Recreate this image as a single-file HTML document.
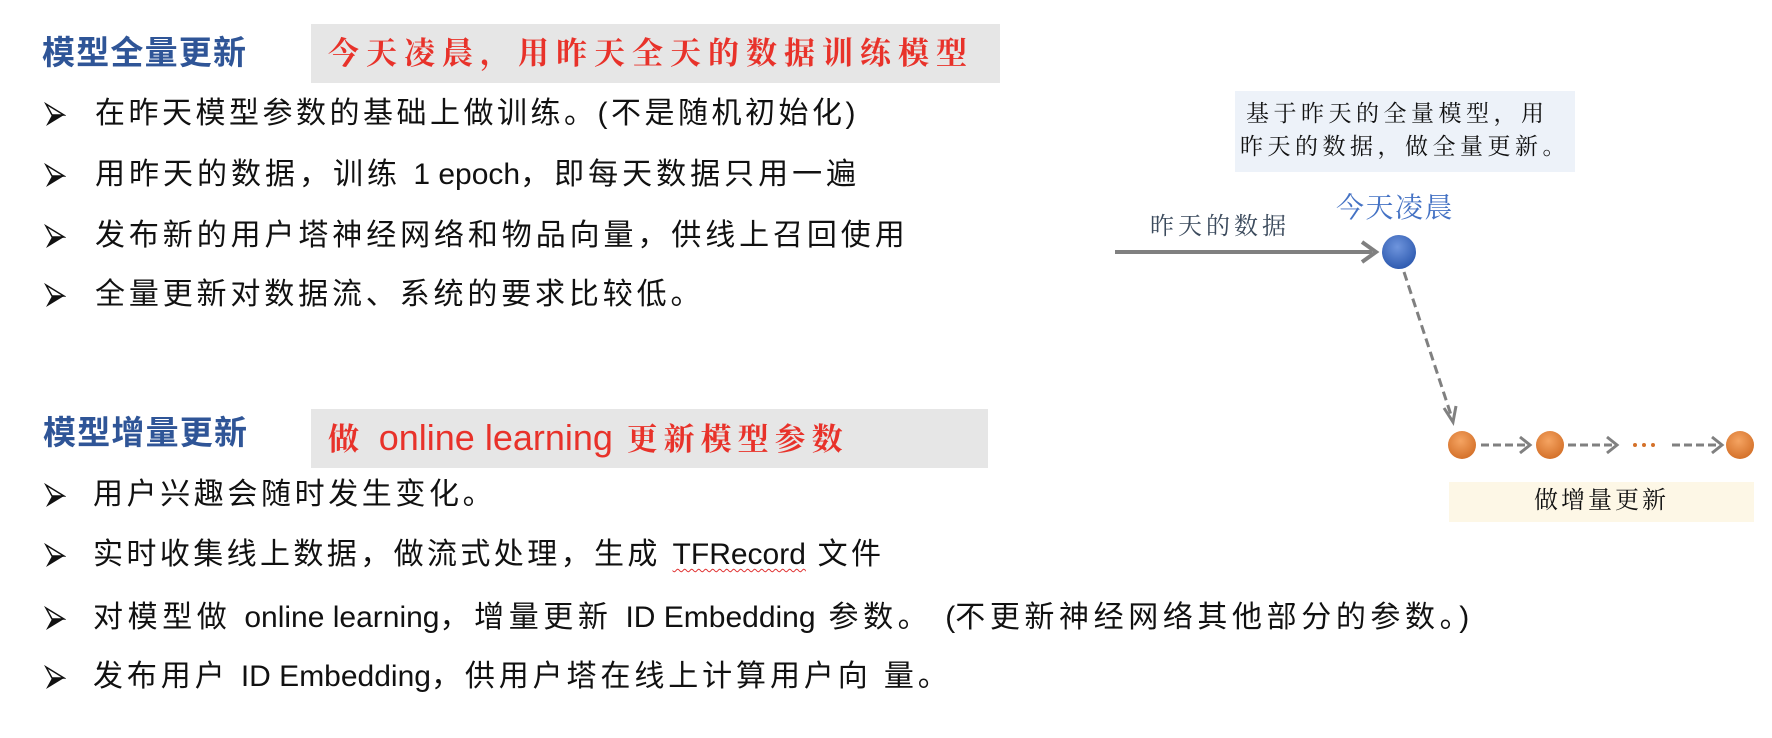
<!DOCTYPE html>
<html><head><meta charset="utf-8"><style>
html,body{margin:0;padding:0;background:#fff;width:1772px;height:738px;overflow:hidden;position:relative;font-family:"Liberation Sans","Noto Sans CJK SC",sans-serif;}
.a{position:absolute;white-space:nowrap;}
.h{font-weight:bold;color:#2f5597;font-size:33px;letter-spacing:1.2px;line-height:36px;}
.box{position:absolute;background:#e6e6e6;}
.red{color:#e8322a;font-family:"Liberation Serif","Noto Serif CJK SC",serif;font-weight:bold;font-size:31px;line-height:34px;}
.li{font-size:30px;line-height:34px;color:#111;}
.li span,.l{letter-spacing:0;}
.bu{position:absolute;width:22px;height:26px;}
.sf{font-family:"Liberation Serif","Noto Serif CJK SC",serif;}
</style></head><body>
<div class="a h" style="left:42px;top:35px;">模型全量更新</div>
<div class="box" style="left:311px;top:24px;width:689px;height:59px;"></div>
<div class="a red" style="left:328px;top:37px;letter-spacing:7px;">今天凌晨，用昨天全天的数据训练模型</div>

<svg class="bu" style="left:44px;top:102px" viewBox="0 0 22 26"><path d="M2 2 L20 13 L2 24 L8 13 Z" fill="#111"/><path d="M2 2 L20 13 L8 13 Z" fill="#fff" stroke="#111" stroke-width="1.5"/></svg>
<div class="a li" style="left:95px;top:97px;letter-spacing:3.5px;">在昨天模型参数的基础上做训练。(不是随机初始化)</div>
<svg class="bu" style="left:44px;top:163px" viewBox="0 0 22 26"><path d="M2 2 L20 13 L2 24 L8 13 Z" fill="#111"/><path d="M2 2 L20 13 L8 13 Z" fill="#fff" stroke="#111" stroke-width="1.5"/></svg>
<div class="a li" style="left:95px;top:158px;letter-spacing:4px;">用昨天的数据，训练 <span>1 epoch</span>，即每天数据只用一遍</div>
<svg class="bu" style="left:44px;top:224px" viewBox="0 0 22 26"><path d="M2 2 L20 13 L2 24 L8 13 Z" fill="#111"/><path d="M2 2 L20 13 L8 13 Z" fill="#fff" stroke="#111" stroke-width="1.5"/></svg>
<div class="a li" style="left:95px;top:219px;letter-spacing:3.9px;">发布新的用户塔神经网络和物品向量，供线上召回使用</div>
<svg class="bu" style="left:44px;top:283px" viewBox="0 0 22 26"><path d="M2 2 L20 13 L2 24 L8 13 Z" fill="#111"/><path d="M2 2 L20 13 L8 13 Z" fill="#fff" stroke="#111" stroke-width="1.5"/></svg>
<div class="a li" style="left:95px;top:278px;letter-spacing:3.85px;">全量更新对数据流、系统的要求比较低。</div>

<div class="a h" style="left:43px;top:415px;">模型增量更新</div>
<div class="box" style="left:311px;top:409px;width:677px;height:59px;"></div>
<div class="a red" style="left:328px;top:421px;letter-spacing:6px;">做 <span style="font-family:'Liberation Sans',sans-serif;font-weight:normal;letter-spacing:0;font-size:36px;">online learning</span> 更新模型参数</div>

<svg class="bu" style="left:44px;top:483px" viewBox="0 0 22 26"><path d="M2 2 L20 13 L2 24 L8 13 Z" fill="#111"/><path d="M2 2 L20 13 L8 13 Z" fill="#fff" stroke="#111" stroke-width="1.5"/></svg>
<div class="a li" style="left:93px;top:478px;letter-spacing:3.6px;">用户兴趣会随时发生变化。</div>
<svg class="bu" style="left:44px;top:543px" viewBox="0 0 22 26"><path d="M2 2 L20 13 L2 24 L8 13 Z" fill="#111"/><path d="M2 2 L20 13 L8 13 Z" fill="#fff" stroke="#111" stroke-width="1.5"/></svg>
<div class="a li" style="left:93px;top:538px;letter-spacing:3.4px;">实时收集线上数据，做流式处理，生成 <span style="text-decoration:underline wavy #e03030;text-decoration-thickness:1px;text-underline-offset:4px;">TFRecord</span> 文件</div>
<svg class="bu" style="left:44px;top:606px" viewBox="0 0 22 26"><path d="M2 2 L20 13 L2 24 L8 13 Z" fill="#111"/><path d="M2 2 L20 13 L8 13 Z" fill="#fff" stroke="#111" stroke-width="1.5"/></svg>
<div class="a li" style="left:93px;top:601px;letter-spacing:4.6px;">对模型做 <span>online learning</span>，增量更新 <span>ID Embedding</span> 参数。 <span>(</span>不更新神经网络其他部分的参数。<span>)</span></div>
<svg class="bu" style="left:44px;top:665px" viewBox="0 0 22 26"><path d="M2 2 L20 13 L2 24 L8 13 Z" fill="#111"/><path d="M2 2 L20 13 L8 13 Z" fill="#fff" stroke="#111" stroke-width="1.5"/></svg>
<div class="a li" style="left:93px;top:660px;letter-spacing:3.9px;">发布用户 <span>ID Embedding</span>，供用户塔在线上计算用户向 量。</div>

<div class="box" style="left:1235px;top:91px;width:340px;height:81px;background:#edf2f9;"></div>
<div class="a sf" style="left:1246px;top:100px;font-size:23px;line-height:28px;letter-spacing:4.5px;color:#111;">基于昨天的全量模型，用</div>
<div class="a sf" style="left:1240px;top:133px;font-size:23px;line-height:28px;letter-spacing:4.5px;color:#111;">昨天的数据，做全量更新。</div>
<div class="a sf" style="left:1336px;top:193px;font-size:28px;line-height:32px;letter-spacing:1.5px;color:#4472c4;">今天凌晨</div>
<div class="a sf" style="left:1150px;top:212px;font-size:24px;line-height:30px;letter-spacing:4px;color:#3b4a5c;">昨天的数据</div>
<div class="box" style="left:1449px;top:482px;width:305px;height:40px;background:#fdf7e6;"></div>
<div class="a sf" style="left:1449px;top:486px;width:305px;text-align:center;font-size:24px;line-height:30px;letter-spacing:3px;color:#111;">做增量更新</div>

<svg class="a" style="left:0;top:0" width="1772" height="738">
<defs>
<radialGradient id="b" cx="45%" cy="35%" r="65%"><stop offset="0" stop-color="#6f95dd"/><stop offset="1" stop-color="#2f5bb0"/></radialGradient>
<radialGradient id="o" cx="45%" cy="35%" r="65%"><stop offset="0" stop-color="#f5a462"/><stop offset="1" stop-color="#d4712a"/></radialGradient>
</defs>
<line x1="1115" y1="252" x2="1372" y2="252" stroke="#808080" stroke-width="4"/>
<polyline points="1362,242 1376,252 1362,262" fill="none" stroke="#808080" stroke-width="4"/>
<ellipse cx="1399" cy="252" rx="17" ry="17" fill="url(#b)"/>
<line x1="1404" y1="272" x2="1452" y2="418" stroke="#808080" stroke-width="3" stroke-dasharray="9,5"/>
<polyline points="1444,408 1453,422 1456,406" fill="none" stroke="#808080" stroke-width="3"/>
<g fill="url(#o)"><ellipse cx="1462" cy="445" rx="14" ry="14"/><ellipse cx="1550" cy="445" rx="14" ry="14"/><ellipse cx="1740" cy="445" rx="14" ry="14"/></g>
<g stroke="#808080" stroke-width="3" fill="none">
<line x1="1481" y1="445" x2="1527" y2="445" stroke-dasharray="8,4"/><polyline points="1520,437 1530,445 1520,453"/>
<line x1="1568" y1="445" x2="1614" y2="445" stroke-dasharray="8,4"/><polyline points="1607,437 1617,445 1607,453"/>
<line x1="1672" y1="445" x2="1719" y2="445" stroke-dasharray="8,4"/><polyline points="1712,437 1722,445 1712,453"/>
</g>
<g fill="#d4712a"><circle cx="1635" cy="445" r="2"/><circle cx="1644" cy="445" r="2"/><circle cx="1653" cy="445" r="2"/></g>
</svg>
</body></html>
